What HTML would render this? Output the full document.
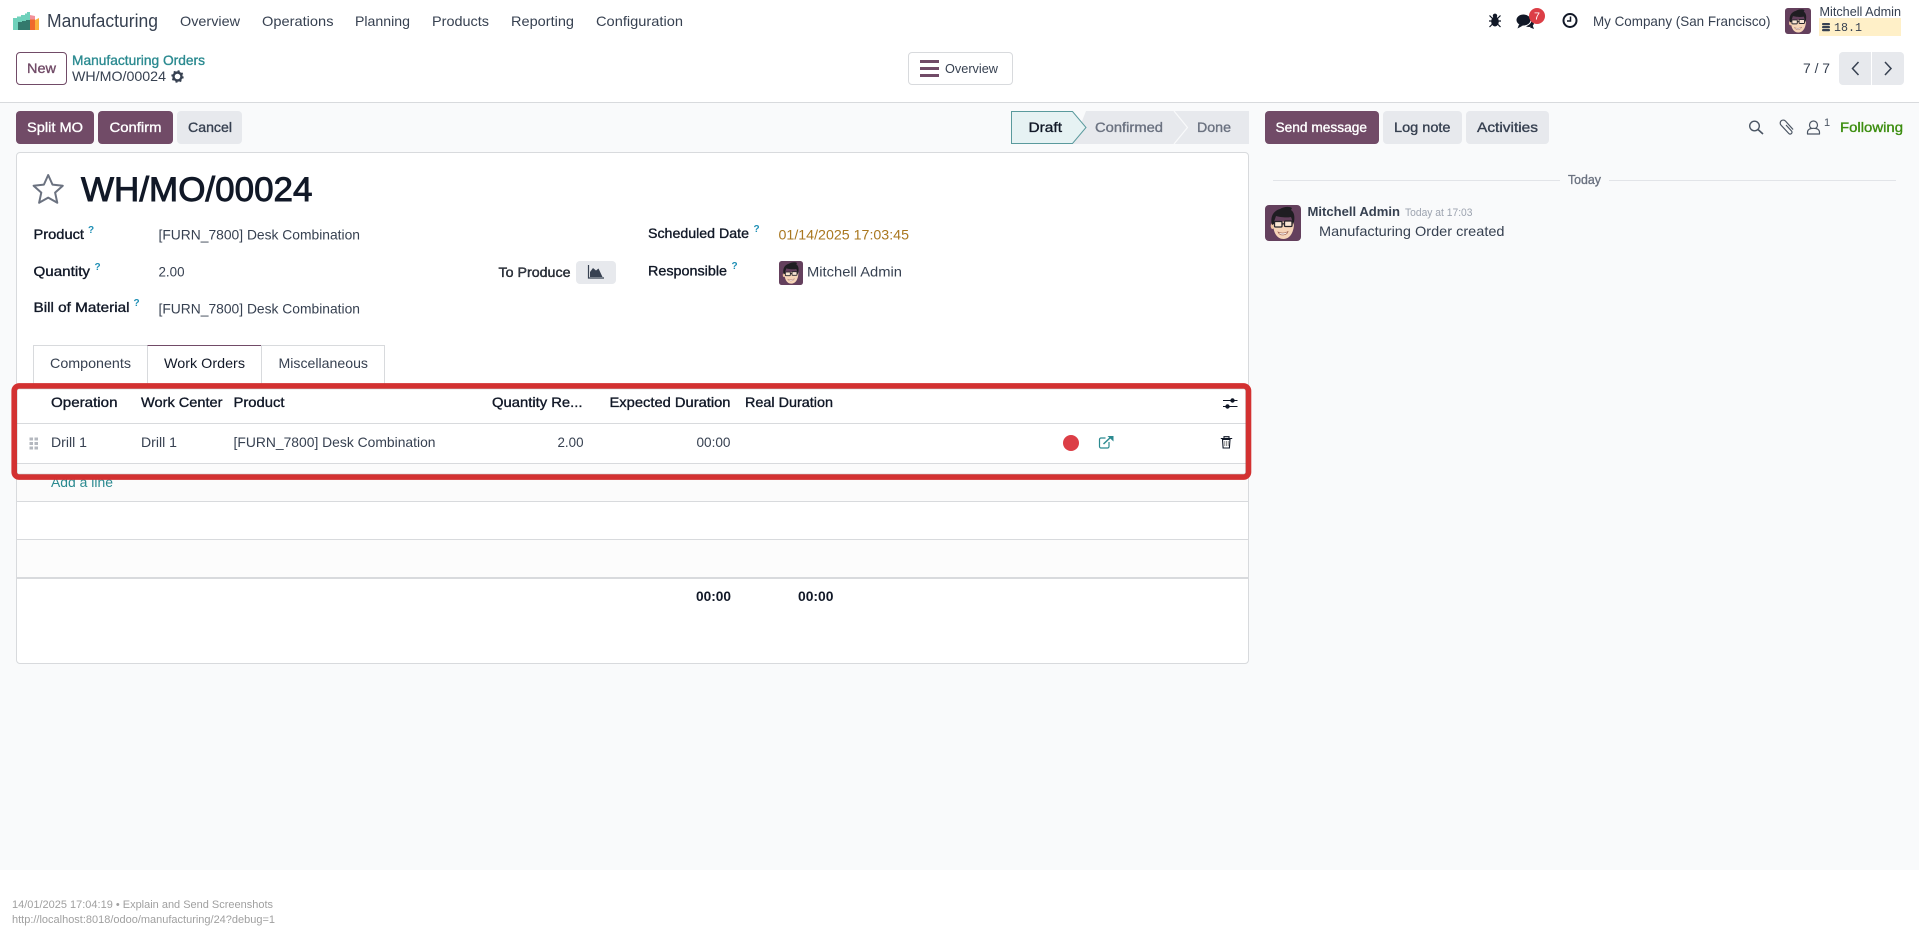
<!DOCTYPE html>
<html lang="en">
<head>
<meta charset="utf-8">
<title>WH/MO/00024 - Manufacturing</title>
<style>
html,body{margin:0;padding:0;width:1919px;height:937px;overflow:hidden;background:#fff}
body{position:relative;font-family:"Liberation Sans",sans-serif}
.b{position:absolute;box-sizing:border-box}
svg{position:absolute;left:0;top:0}
text{font-family:"Liberation Sans",sans-serif;font-size:14px;fill:#374151}
.m{stroke:currentColor;stroke-width:.35px}
.h{fill:#111827;color:#111827}
.lab{fill:#111827;color:#111827}
.q{font-size:10px;fill:#1f8fb5;font-weight:bold}
</style>
</head>
<body>
<!-- page zones -->
<div class="b" style="left:0;top:102px;width:1919px;height:768px;background:#f9fafb;border-top:1px solid #d8dadd"></div>
<!-- control buttons -->
<div class="b" style="left:16px;top:52px;width:51px;height:33px;border:1px solid #714b67;border-radius:4px;background:#fff"></div>
<div class="b" style="left:908px;top:52px;width:105px;height:33px;border:1px solid #d8dadd;border-radius:4px;background:#fff"></div>
<div class="b" style="left:1839px;top:52px;width:32px;height:33px;background:#e7e9ed;border-radius:4px 0 0 4px"></div>
<div class="b" style="left:1872px;top:52px;width:32px;height:33px;background:#e7e9ed;border-radius:0 4px 4px 0"></div>
<!-- action buttons -->
<div class="b" style="left:16px;top:111px;width:78px;height:33px;background:#714b67;border-radius:4px"></div>
<div class="b" style="left:98px;top:111px;width:75px;height:33px;background:#714b67;border-radius:4px"></div>
<div class="b" style="left:177px;top:111px;width:65px;height:33px;background:#e7e9ed;border-radius:4px"></div>
<div class="b" style="left:1265px;top:111px;width:114px;height:33px;background:#714b67;border-radius:4px"></div>
<div class="b" style="left:1383px;top:111px;width:79px;height:33px;background:#e7e9ed;border-radius:4px"></div>
<div class="b" style="left:1466px;top:111px;width:83px;height:33px;background:#e7e9ed;border-radius:4px"></div>
<!-- form card -->
<div class="b" style="left:16px;top:152px;width:1233px;height:512px;background:#fff;border:1px solid #d8dadd;border-radius:4px"></div>
<div class="b" style="left:576px;top:261px;width:40px;height:23px;background:#e7e9ed;border-radius:4px"></div>
<!-- tabs -->
<div class="b" style="left:33px;top:345px;width:115px;height:40px;border:1px solid #d8dadd;border-bottom:0;background:#fff"></div>
<div class="b" style="left:147px;top:345px;width:115px;height:40px;border:1px solid #d8dadd;border-top:1px solid #714b67;border-bottom:0;background:#fff"></div>
<div class="b" style="left:261px;top:345px;width:124px;height:40px;border:1px solid #d8dadd;border-bottom:0;background:#fff"></div>
<!-- list rows -->
<div class="b" style="left:17px;top:463px;width:1231px;height:38px;background:#fbfbfb"></div>
<div class="b" style="left:17px;top:539px;width:1231px;height:38px;background:#fcfcfc"></div>
<div class="b" style="left:17px;top:423px;width:1231px;height:1px;background:#d8dadd"></div>
<div class="b" style="left:17px;top:463px;width:1231px;height:1px;background:#d8dadd"></div>
<div class="b" style="left:17px;top:501px;width:1231px;height:1px;background:#d8dadd"></div>
<div class="b" style="left:17px;top:539px;width:1231px;height:1px;background:#d8dadd"></div>
<div class="b" style="left:17px;top:577px;width:1231px;height:2px;background:#d8dadd"></div>
<!-- chatter separators -->
<div class="b" style="left:1273px;top:180px;width:287px;height:1px;background:#e2e4e8"></div>
<div class="b" style="left:1609px;top:180px;width:287px;height:1px;background:#e2e4e8"></div>

<svg width="1919" height="937" viewBox="0 0 1919 937" xmlns="http://www.w3.org/2000/svg">
<defs>
<symbol id="av" viewBox="0 0 36 36">
<rect width="36" height="36" rx="4" fill="#64405d"/>
<ellipse cx="7.500" cy="21" rx="1.800" ry="3" fill="#f0c4a2"/>
<path d="M8 17c0 11 4 17 10.500 17S29.500 27 29 16z" fill="#f6d5b8"/>
<path d="M7 20C5 12 8 6 15 4c3-2 9-3 12-1l-1 2c3 2 4 6 3 12l-1 3c-.5-3-1-6-2-8-5 1-12 0-15-1-1 3-2 5-2 8z" fill="#1f1d22"/>
<rect x="9.500" y="16.500" width="7.500" height="5.500" rx="1" fill="#fff" fill-opacity=".4" stroke="#26242a" stroke-width="1.300"/>
<rect x="19.500" y="16" width="7.500" height="5.500" rx="1" fill="#fff" fill-opacity=".4" stroke="#26242a" stroke-width="1.300"/>
<path d="M17 19l2.500-.3" stroke="#26242a" stroke-width="1.200"/>
<path d="M13 27c3 1.500 7 1.500 10-.5-1 4-8 5-10 .5z" fill="#fff" stroke="#9a5b4a" stroke-width=".6"/>
</symbol>
</defs>

<!-- logo -->
<path d="M13 18h4v-1.500h4V15h4v-1.500h2V12h3v18H13z" fill="#6fd1bb"/>
<path d="M18 22h4v-1h4v-1h4v10H18z" fill="#33796d"/>
<path d="M30 15l5 1v4h-5z" fill="#f2919a"/>
<path d="M30 19.500h5V30h-5z" fill="#ef6a2c"/>
<path d="M35 20l4-2v12h-4z" fill="#fbb13c"/>

<!-- nav -->
<text x="47" y="27" textLength="111" lengthAdjust="spacingAndGlyphs" style="font-size:18px">Manufacturing</text>
<text x="180" y="26" textLength="60" lengthAdjust="spacingAndGlyphs">Overview</text>
<text x="262" y="26" textLength="71.500" lengthAdjust="spacingAndGlyphs">Operations</text>
<text x="355" y="26" textLength="55" lengthAdjust="spacingAndGlyphs">Planning</text>
<text x="432" y="26" textLength="57" lengthAdjust="spacingAndGlyphs">Products</text>
<text x="511" y="26" textLength="63" lengthAdjust="spacingAndGlyphs">Reporting</text>
<text x="596" y="26" textLength="87" lengthAdjust="spacingAndGlyphs">Configuration</text>

<!-- systray -->
<g fill="#111827">
<ellipse cx="1495" cy="21.500" rx="3.800" ry="5"/>
<circle cx="1495" cy="15.800" r="2.200"/>
<path d="M1489.500 15.500l3 3M1500.500 15.500l-3 3M1489 21h12M1489.500 27l3-3M1500.500 27l-3-3" stroke="#111827" stroke-width="1.200" fill="none"/>
<path d="M1530 27.500l4 1.500-1.500-4z"/>
<ellipse cx="1529" cy="23" rx="5" ry="4"/>
<ellipse cx="1523.500" cy="20" rx="7.500" ry="6" stroke="#fff" stroke-width="1"/>
<path d="M1519 24.500l-1.500 4 5.500-3z"/>
</g>
<circle cx="1537" cy="16" r="8" fill="#dc3e46"/>
<text x="1534" y="19.500" style="font-size:10.500px;fill:#fff" textLength="6" lengthAdjust="spacingAndGlyphs">7</text>
<circle cx="1570" cy="20.500" r="6.500" fill="none" stroke="#111827" stroke-width="2"/>
<path d="M1570.500 16.500v4.500h-3.500" fill="none" stroke="#111827" stroke-width="1.500"/>
<text x="1593" y="26" textLength="177.500" lengthAdjust="spacingAndGlyphs">My Company (San Francisco)</text>
<use href="#av" x="1785" y="8" width="26" height="26"/>
<text x="1819.500" y="16" style="font-size:12.500px" textLength="81.500" lengthAdjust="spacingAndGlyphs">Mitchell Admin</text>
<rect x="1819" y="18" width="82" height="18" fill="#fff0c8"/>
<g fill="#374151"><rect x="1822" y="23" width="8" height="2.200" rx="1"/><rect x="1822" y="26" width="8" height="2.200" rx="1"/><rect x="1822" y="29" width="8" height="2.200" rx="1"/></g>
<text x="1834" y="31" style="font-family:'Liberation Mono',monospace;font-size:12px" textLength="28" lengthAdjust="spacingAndGlyphs">18.1</text>

<!-- breadcrumb -->
<text x="27" y="73" class="m" style="fill:#714b67;color:#714b67" textLength="29" lengthAdjust="spacingAndGlyphs">New</text>
<text x="72" y="65" class="m" style="fill:#2b8a90;color:#2b8a90" textLength="133" lengthAdjust="spacingAndGlyphs">Manufacturing Orders</text>
<text x="72" y="81" textLength="94" lengthAdjust="spacingAndGlyphs">WH/MO/00024</text>
<circle cx="177.500" cy="76.500" r="4" fill="none" stroke="#374151" stroke-width="2.400"/>
<circle cx="177.500" cy="76.500" r="5.400" fill="none" stroke="#374151" stroke-width="1.600" stroke-dasharray="2 2.240"/>

<!-- overview button -->
<g fill="#714b67"><rect x="920" y="60" width="19" height="3"/><rect x="920" y="67" width="19" height="3"/><rect x="920" y="74" width="19" height="3"/></g>
<text x="945" y="73" style="font-size:13px" textLength="53" lengthAdjust="spacingAndGlyphs">Overview</text>

<!-- pager -->
<text x="1803" y="73" textLength="27" lengthAdjust="spacingAndGlyphs">7 / 7</text>
<path d="M1858.500 62l-6 6.500 6 6.500M1885 62l6 6.500-6 6.500" fill="none" stroke="#374151" stroke-width="1.500"/>

<!-- actions -->
<text x="27" y="132" class="m" style="fill:#fff;color:#fff" textLength="56" lengthAdjust="spacingAndGlyphs">Split MO</text>
<text x="109.500" y="132" class="m" style="fill:#fff;color:#fff" textLength="52" lengthAdjust="spacingAndGlyphs">Confirm</text>
<text x="188" y="132" class="m" style="color:#374151" textLength="44" lengthAdjust="spacingAndGlyphs">Cancel</text>

<!-- status bar -->
<path d="M1086 111H1249V144H1073z" fill="#e7e9ed"/>
<path d="M1011.500 111.500H1072.500L1086 127.500 1072.500 143.500H1011.500z" fill="#e6f2f3" stroke="#5a9a9d"/>
<path d="M1174 111l13.500 16.500L1174 144" fill="none" stroke="#f9fafb" stroke-width="1.200"/>
<text x="1028.500" y="132" class="m" style="fill:#111827;color:#111827" textLength="33.500" lengthAdjust="spacingAndGlyphs">Draft</text>
<text x="1095" y="132" class="m" style="fill:#6b7280;color:#6b7280" textLength="68" lengthAdjust="spacingAndGlyphs">Confirmed</text>
<text x="1197" y="132" class="m" style="fill:#6b7280;color:#6b7280" textLength="34" lengthAdjust="spacingAndGlyphs">Done</text>

<!-- title -->
<path d="M48.200 175l4.300 9.600 10.300 1.100-7.700 6.900 2.200 10.200-9.100-5.200-9.100 5.200 2.200-10.200-7.700-6.900 10.300-1.100z" fill="none" stroke="#6b7280" stroke-width="2" stroke-linejoin="round"/>
<text x="81" y="201" class="h" style="font-size:34px;stroke:#111827;stroke-width:.9px" textLength="231.500" lengthAdjust="spacingAndGlyphs">WH/MO/00024</text>

<!-- fields -->
<text x="33.500" y="239" class="lab m" textLength="50.500" lengthAdjust="spacingAndGlyphs">Product</text>
<text x="88" y="233" class="q">?</text>
<text x="158.500" y="239.500" textLength="201.500" lengthAdjust="spacingAndGlyphs">[FURN_7800] Desk Combination</text>
<text x="33.500" y="276" class="lab m" textLength="56.500" lengthAdjust="spacingAndGlyphs">Quantity</text>
<text x="94.500" y="270" class="q">?</text>
<text x="158.500" y="276.500" textLength="26" lengthAdjust="spacingAndGlyphs">2.00</text>
<text x="33.500" y="312" class="lab m" textLength="96" lengthAdjust="spacingAndGlyphs">Bill of Material</text>
<text x="133.500" y="306" class="q">?</text>
<text x="158.500" y="313.500" textLength="201.500" lengthAdjust="spacingAndGlyphs">[FURN_7800] Desk Combination</text>
<text x="498.500" y="277" class="m" textLength="72" lengthAdjust="spacingAndGlyphs">To Produce</text>
<path d="M588.500 265v13h15.500" fill="none" stroke="#374151" stroke-width="1.200"/>
<path d="M590 277v-5l3-4 3 2.500 2.500-2 4 8.500z" fill="#374151"/>
<text x="648" y="238" class="lab m" textLength="101" lengthAdjust="spacingAndGlyphs">Scheduled Date</text>
<text x="753.500" y="232" class="q">?</text>
<text x="778.500" y="239.500" style="fill:#a9771f" textLength="130.500" lengthAdjust="spacingAndGlyphs">01/14/2025 17:03:45</text>
<text x="648" y="275.500" class="lab m" textLength="79" lengthAdjust="spacingAndGlyphs">Responsible</text>
<text x="731.500" y="269" class="q">?</text>
<use href="#av" x="779" y="261" width="24" height="24"/>
<text x="807" y="276.500" textLength="95" lengthAdjust="spacingAndGlyphs">Mitchell Admin</text>

<!-- tabs -->
<text x="50" y="368" textLength="81" lengthAdjust="spacingAndGlyphs">Components</text>
<text x="164" y="368" class="h" textLength="81" lengthAdjust="spacingAndGlyphs">Work Orders</text>
<text x="278.500" y="368" textLength="89.500" lengthAdjust="spacingAndGlyphs">Miscellaneous</text>

<!-- table header -->
<text x="51" y="407" class="h m" textLength="66.500" lengthAdjust="spacingAndGlyphs">Operation</text>
<text x="141" y="407" class="h m" textLength="81.500" lengthAdjust="spacingAndGlyphs">Work Center</text>
<text x="233.500" y="407" class="h m" textLength="51" lengthAdjust="spacingAndGlyphs">Product</text>
<text x="492" y="407" class="h m" textLength="90.500" lengthAdjust="spacingAndGlyphs">Quantity Re...</text>
<text x="609.500" y="407" class="h m" textLength="121" lengthAdjust="spacingAndGlyphs">Expected Duration</text>
<text x="745" y="407" class="h m" textLength="88" lengthAdjust="spacingAndGlyphs">Real Duration</text>
<path d="M1223 400.500h14.500M1223 406.500h14.500" stroke="#111827" stroke-width="1"/>
<circle cx="1232.500" cy="400.500" r="2.200" fill="#111827"/>
<circle cx="1227.500" cy="406.500" r="2.200" fill="#111827"/>

<!-- table row -->
<g fill="#b4b8bf">
<rect x="29.500" y="437.500" width="3.500" height="3"/><rect x="34.500" y="437.500" width="3.500" height="3"/>
<rect x="29.500" y="442" width="3.500" height="3"/><rect x="34.500" y="442" width="3.500" height="3"/>
<rect x="29.500" y="446.500" width="3.500" height="3"/><rect x="34.500" y="446.500" width="3.500" height="3"/>
</g>
<text x="51" y="447" textLength="36" lengthAdjust="spacingAndGlyphs">Drill 1</text>
<text x="141" y="447" textLength="36" lengthAdjust="spacingAndGlyphs">Drill 1</text>
<text x="233.500" y="447" textLength="202" lengthAdjust="spacingAndGlyphs">[FURN_7800] Desk Combination</text>
<text x="557.500" y="447" textLength="26" lengthAdjust="spacingAndGlyphs">2.00</text>
<text x="696.500" y="447" textLength="34" lengthAdjust="spacingAndGlyphs">00:00</text>
<circle cx="1071" cy="443" r="8" fill="#dc3e46"/>
<path d="M1109 442v4.500a1.500 1.500 0 0 1-1.500 1.500h-6.500a1.500 1.500 0 0 1-1.500-1.500v-7a1.500 1.500 0 0 1 1.500-1.500h4.500" fill="none" stroke="#2b8a90" stroke-width="1.200"/>
<path d="M1103.500 444l8-7.500" fill="none" stroke="#2b8a90" stroke-width="1.500"/>
<path d="M1107.500 436h6v5.500z" fill="#2b8a90"/>
<path d="M1222.500 439.500h7.500l-.6 8.500h-6.300zM1220.800 438.500h11.400M1224 438.500v-1.800h5v1.800" fill="none" stroke="#111827" stroke-width="1.100"/>
<path d="M1224.800 441v5M1226.500 441v5M1228.200 441v5" stroke="#666" stroke-width=".7"/>

<!-- add a line -->
<text x="51" y="487" style="fill:#2b8a90" textLength="62" lengthAdjust="spacingAndGlyphs">Add a line</text>

<!-- highlight rectangle -->
<rect x="14.200" y="385.900" width="1234.300" height="91.200" rx="5" fill="none" stroke="#d33131" stroke-width="5.600"/>
<rect x="17.200" y="388.900" width="1228.300" height="85.200" rx="2" fill="none" stroke="#6b6b6b" stroke-opacity=".35" stroke-width=".6"/>

<!-- footer totals -->
<text x="696" y="601" class="h" style="font-weight:bold" textLength="35" lengthAdjust="spacingAndGlyphs">00:00</text>
<text x="798" y="601" class="h" style="font-weight:bold" textLength="35.500" lengthAdjust="spacingAndGlyphs">00:00</text>

<!-- chatter -->
<text x="1275.500" y="132" class="m" style="fill:#fff;color:#fff" textLength="91.500" lengthAdjust="spacingAndGlyphs">Send message</text>
<text x="1394" y="132" class="m" style="color:#374151" textLength="56.500" lengthAdjust="spacingAndGlyphs">Log note</text>
<text x="1477" y="132" class="m" style="color:#374151" textLength="61" lengthAdjust="spacingAndGlyphs">Activities</text>
<circle cx="1754.500" cy="126" r="4.800" fill="none" stroke="#4b5563" stroke-width="1.400"/>
<path d="M1758 129.500l5 4.500" stroke="#4b5563" stroke-width="1.600"/>
<path d="M1786 125l5.500 6a1.800 1.800 0 0 1-2.700 2.500l-7.800-8.400a3 3 0 0 1 4.400-4.100l7.700 8.500" fill="none" stroke="#4b5563" stroke-width="1.200"/>
<circle cx="1813.500" cy="125" r="4" fill="none" stroke="#4b5563" stroke-width="1.200"/>
<path d="M1807.500 134v-1.500c0-2.800 2-4.200 6-4.200s6 1.400 6 4.200v1.500z" fill="#f9fafb" stroke="#4b5563" stroke-width="1.200" stroke-linejoin="round"/>
<text x="1824" y="126" style="font-size:11px;fill:#4b5563">1</text>
<text x="1840" y="132" class="m" style="fill:#3d8e10;color:#3d8e10" textLength="63" lengthAdjust="spacingAndGlyphs">Following</text>
<text x="1568" y="184" class="m" style="font-size:13px;fill:#6b7280;color:#6b7280" textLength="33" lengthAdjust="spacingAndGlyphs">Today</text>
<use href="#av" x="1265" y="205" width="36" height="36"/>
<text x="1307.500" y="216" style="font-weight:bold;font-size:13px" textLength="92.500" lengthAdjust="spacingAndGlyphs">Mitchell Admin</text>
<text x="1405" y="216" style="font-size:11px;fill:#9ca3af" textLength="67.500" lengthAdjust="spacingAndGlyphs">Today at 17:03</text>
<text x="1319" y="236" textLength="185.500" lengthAdjust="spacingAndGlyphs">Manufacturing Order created</text>

<!-- screenshot footer -->
<text x="12" y="908" style="font-size:11px;fill:#a0a0a0" textLength="261" lengthAdjust="spacingAndGlyphs">14/01/2025 17:04:19 • Explain and Send Screenshots</text>
<text x="12" y="923" style="font-size:11px;fill:#a0a0a0" textLength="263" lengthAdjust="spacingAndGlyphs">http://localhost:8018/odoo/manufacturing/24?debug=1</text>
</svg>
</body>
</html>
